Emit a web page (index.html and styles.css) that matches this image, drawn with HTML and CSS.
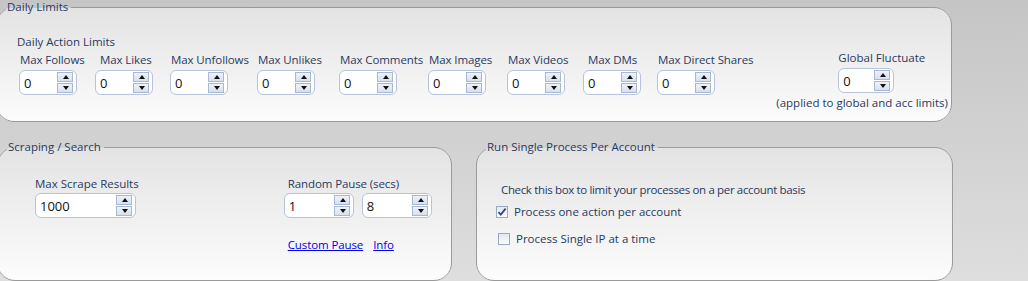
FILE: index.html
```html
<!DOCTYPE html>
<html lang="en">
  <head>
    <meta charset="UTF-8" />
    <title>Daily Limits</title>
    <link rel="stylesheet" href="styles.css">
  </head>
  <body>
    <!-- Daily limits -->
    <fieldset class="group daily">
      <legend>Daily Limits</legend>
      <div class="daily-title">Daily Action Limits</div>
      <div class="daily-row">
        <div class="limits">
          <div class="lim">
            <div class="lbl">Max Follows</div>
            <div class="spin"><span class="val">0</span><span class="btns"><i class="up"></i><i class="down"></i></span></div>
          </div>
          <div class="lim">
            <div class="lbl shift">Max Likes</div>
            <div class="spin"><span class="val">0</span><span class="btns"><i class="up"></i><i class="down"></i></span></div>
          </div>
          <div class="lim">
            <div class="lbl">Max Unfollows</div>
            <div class="spin"><span class="val">0</span><span class="btns"><i class="up"></i><i class="down"></i></span></div>
          </div>
          <div class="lim">
            <div class="lbl">Max Unlikes</div>
            <div class="spin"><span class="val">0</span><span class="btns"><i class="up"></i><i class="down"></i></span></div>
          </div>
          <div class="lim">
            <div class="lbl">Max Comments</div>
            <div class="spin"><span class="val">0</span><span class="btns"><i class="up"></i><i class="down"></i></span></div>
          </div>
          <div class="lim">
            <div class="lbl">Max Images</div>
            <div class="spin"><span class="val">0</span><span class="btns"><i class="up"></i><i class="down"></i></span></div>
          </div>
          <div class="lim">
            <div class="lbl">Max Videos</div>
            <div class="spin"><span class="val">0</span><span class="btns"><i class="up"></i><i class="down"></i></span></div>
          </div>
          <div class="lim">
            <div class="lbl shift">Max DMs</div>
            <div class="spin"><span class="val">0</span><span class="btns"><i class="up"></i><i class="down"></i></span></div>
          </div>
          <div class="lim">
            <div class="lbl">Max Direct Shares</div>
            <div class="spin"><span class="val">0</span><span class="btns"><i class="up"></i><i class="down"></i></span></div>
          </div>
        </div>

        <div class="global">
          <div class="lbl">Global Fluctuate</div>
          <div class="spin"><span class="val">0</span><span class="btns"><i class="up"></i><i class="down"></i></span></div>
          <div class="note">(applied to global and acc limits)</div>
        </div>
      </div>
    </fieldset>

    <div class="bottom">
      <!-- Scraping -->
      <fieldset class="group scrape">
        <legend>Scraping / Search</legend>
        <div class="scrape-row">
          <div class="col">
            <div class="lbl">Max Scrape Results</div>
            <div class="spin wide"><span class="val">1000</span><span class="btns"><i class="up"></i><i class="down"></i></span></div>
          </div>
          <div class="col pause">
            <div class="lbl">Random Pause (secs)</div>
            <div class="pair">
              <div class="spin mid"><span class="val">1</span><span class="btns"><i class="up"></i><i class="down"></i></span></div>
              <div class="spin mid"><span class="val">8</span><span class="btns"><i class="up"></i><i class="down"></i></span></div>
            </div>
            <div class="links">
              <a href="#">Custom Pause</a>
              <a href="#">Info</a>
            </div>
          </div>
        </div>
      </fieldset>

      <!-- Single process -->
      <fieldset class="group single">
        <legend>Run Single Process Per Account</legend>
        <div class="hint">Check this box to limit your processes on a per account basis</div>
        <label class="chk">
          <span class="box checked">
            <svg width="10" height="10" viewBox="0 0 10 10"><path d="M1.5 5.2 L3.8 7.6 L8.6 1.6" fill="none" stroke="#2c4a84" stroke-width="1.8"/></svg>
          </span>
          Process one action per account
        </label>
        <label class="chk second">
          <span class="box"></span>
          Process Single IP at a time
        </label>
      </fieldset>
    </div>
  </body>
</html>
```

FILE: styles.css
```css
/* Основа */
body {
  margin: 0;
  height: 281px;
  overflow: hidden;
  background: linear-gradient(#c5c5c5, #dedede);
  font-family: "Open Sans", "Noto Sans", sans-serif;
  font-size: 11.5px;
  color: #283a62;
}

.group {
  box-sizing: border-box;
  margin: 0;
  padding: 0;
  min-inline-size: 0;
  border: 1px solid #9a9a9a;
  border-radius: 18px;
  background: linear-gradient(#e3e3e3, #fcfcfc);
}

.group legend {
  margin-left: 9px;
  padding: 0 3px 0 1px;
  line-height: 14px;
  color: #283a62;
}

.lbl {
  line-height: 16px;
  white-space: nowrap;
}

/* Спиннер */
.spin {
  box-sizing: border-box;
  display: flex;
  align-items: center;
  width: 58px;
  height: 25px;
  padding: 0 3px 0 4px;
  border: 1px solid #b7c3da;
  border-radius: 6px;
  background: #fff;
}

.spin .val {
  flex: 1;
  font-size: 13px;
  color: #111;
}

.btns {
  display: flex;
  flex-direction: column;
  gap: 1px;
  width: 16px;
}

.btns i {
  position: relative;
  height: 8px;
  border: 1px solid #a9b7cf;
  background: linear-gradient(#eef3fa, #d6e0ef);
}

.btns i::after {
  content: "";
  position: absolute;
  left: 5px;
  top: 2px;
  border-left: 3px solid transparent;
  border-right: 3px solid transparent;
}

.btns .up::after {
  border-bottom: 4px solid #111;
}

.btns .down::after {
  border-top: 4px solid #111;
}

/* Daily limits */
.daily {
  width: 956px;
  height: 122px;
  margin-left: -4px;
}

.daily-title {
  margin: 20px 0 0 20px;
  line-height: 16px;
}

.daily-row {
  display: flex;
  padding-left: 22px;
}

.limits {
  display: grid;
  grid-template-columns: 76px 75px 87px 82px 89px 79px 76px 74px auto;
  margin-top: 2px;
}

.lim .lbl {
  padding-left: 1px;
  margin-bottom: 2px;
  letter-spacing: -0.1px;
}

.lim .lbl.shift {
  padding-left: 5px;
}

.global {
  margin-left: auto;
  margin-right: 3px;
  display: flex;
  flex-direction: column;
}

.global .lbl,
.global .spin {
  margin-left: 62px;
}

.global .spin {
  width: 56px;
  margin-top: 2px;
}

.note {
  line-height: 16px;
  margin-top: 2px;
  white-space: nowrap;
}

/* Нижний ряд */
.bottom {
  display: flex;
  gap: 24px;
  margin-top: 18px;
  margin-left: -3px;
}

.scrape {
  width: 455px;
  height: 141px;
}

.scrape-row {
  display: flex;
  gap: 146px;
  padding: 22px 0 0 37px;
}

.scrape .lbl {
  margin-bottom: 1px;
}

.spin.wide {
  width: 101px;
}

.pause {
  margin-left: -1px;
}

.pause .lbl {
  padding-left: 4px;
  letter-spacing: -0.1px;
}

.pair {
  display: flex;
  gap: 8px;
}

.spin.mid {
  width: 70px;
}

.links {
  display: flex;
  gap: 10px;
  margin-top: 19px;
  padding-left: 4px;
  letter-spacing: -0.1px;
}

.links a {
  color: #0000ee;
}

.single {
  width: 477px;
  height: 141px;
}

.hint {
  margin: 28px 0 0 24px;
  line-height: 16px;
  white-space: nowrap;
  letter-spacing: -0.35px;
}

.chk {
  display: flex;
  align-items: center;
  gap: 6px;
  margin: 6px 0 0 19px;
  line-height: 16px;
}

.chk.second {
  margin: 11px 0 0 21px;
}

.box {
  box-sizing: border-box;
  display: flex;
  align-items: center;
  justify-content: center;
  width: 12px;
  height: 12px;
  border: 1px solid #9aa9c4;
  background: linear-gradient(#e4e8ee, #fafbfc);
}
```
